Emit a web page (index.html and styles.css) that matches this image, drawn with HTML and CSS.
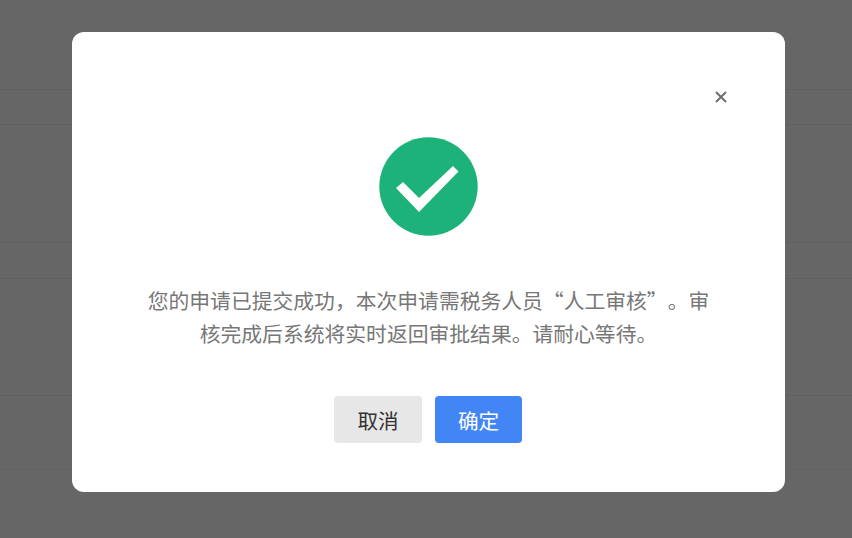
FILE: index.html
```html
<!DOCTYPE html>
<html lang="zh-CN">
<head>
<meta charset="utf-8">
<title>提交成功</title>
<link rel="stylesheet" href="styles.css">
</head>
<body>
<div class="rows">
  <div class="row r1"></div>
  <div class="row r2"></div>
  <div class="row r3"></div>
  <div class="row r4"></div>
  <div class="row r5"></div>
  <div class="row r6"></div>
</div>
<div class="overlay">
  <div class="modal">
    <button class="close" aria-label="关闭">
      <svg width="12" height="12" viewBox="0 0 12 12"><path d="M1 1L11 11M11 1L1 11" stroke="#6e6e6e" stroke-width="2" fill="none"/></svg>
    </button>
    <svg class="success" width="99" height="99" viewBox="0 0 99 99">
      <circle cx="49.5" cy="49.5" r="49.2" fill="#1db27a"/>
      <polygon points="17,51 24,45 40,61 74,29 79.5,34.5 40,75" fill="#fff"/>
    </svg>
    <p class="message">您的申请已提交成功，本次申请需税务人员“人工审核”。审<br>核完成后系统将实时返回审批结果。请耐心等待。</p>
    <div class="actions">
      <button class="btn cancel">取消</button>
      <button class="btn ok">确定</button>
    </div>
  </div>
</div>
</body>
</html>
```
FILE: styles.css
```css
html, body {
  margin: 0;
  height: 100%;
  background: #666666;
  overflow: hidden;
  font-family: "Noto Sans CJK SC", "Liberation Sans", sans-serif;
}
.rows {
  display: flex;
  flex-direction: column;
}
.row {
  border-bottom: 1px solid #606060;
  box-sizing: border-box;
}
.r1 { height: 90px; }
.r2 { height: 35px; }
.r3 { height: 118px; }
.r4 { height: 36px; }
.r5 { height: 117px; }
.r6 { height: 74px; border-bottom-color: #636363; }
.overlay {
  position: fixed;
  inset: 0;
  display: flex;
  align-items: flex-start;
  justify-content: flex-start;
  padding: 32px 0 0 72px;
}
.modal {
  position: relative;
  box-sizing: border-box;
  width: 713px;
  height: 460px;
  background: #fff;
  border-radius: 12px;
  display: flex;
  flex-direction: column;
  align-items: center;
  padding-top: 105px;
}
.close {
  position: absolute;
  top: 59px;
  right: 58px;
  width: 12px;
  height: 12px;
  padding: 0;
  border: 0;
  background: none;
  display: flex;
}
.success {
  display: block;
}
.message {
  margin: 48px 0 0;
  width: 570px;
  font-size: 20.8px;
  line-height: 33px;
  color: #777777;
  text-align: center;
  white-space: nowrap;
  text-spacing-trim: space-all;
}
.actions {
  display: flex;
  gap: 13px;
  margin-top: 46px;
  padding-right: 1px;
}
.btn {
  width: 88px;
  height: 47px;
  border: 0;
  border-radius: 4px;
  padding: 0;
  font-family: inherit;
  font-size: 20.6px;
}
.cancel {
  background: #e7e7e7;
  color: #333333;
}
.ok {
  width: 87px;
  background: #4285f4;
  color: #ffffff;
}
```
